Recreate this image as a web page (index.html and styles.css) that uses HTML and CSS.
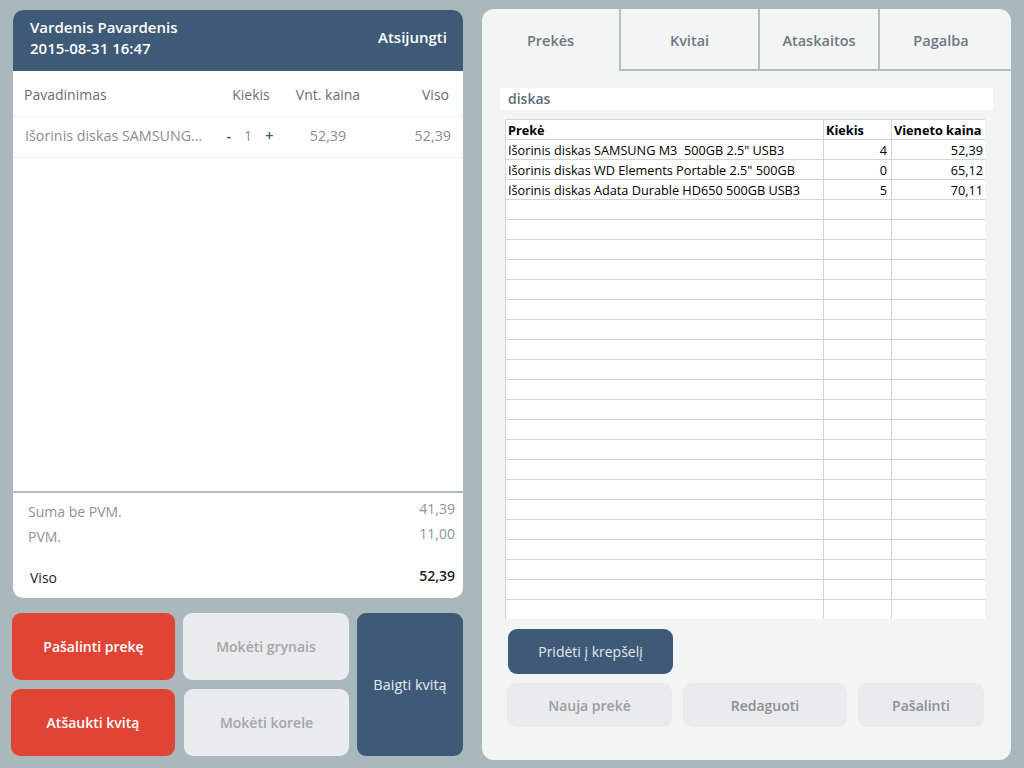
FILE: index.html
```html
<!DOCTYPE html>
<html lang="lt">
<head>
<meta charset="utf-8">
<title>Kasa</title>
<link rel="stylesheet" href="styles.css">
</head>
<body>
<div class="app">
  <div class="left">
    <section class="receipt">
      <header class="rc-head">
        <div class="user">
          <div>Vardenis Pavardenis</div>
          <div>2015-08-31 16:47</div>
        </div>
        <div class="logout">Atsijungti</div>
      </header>
      <div class="rc-cols">
        <span class="c-name">Pavadinimas</span>
        <span class="c-qty">Kiekis</span>
        <span class="c-price">Vnt. kaina</span>
        <span class="c-total">Viso</span>
      </div>
      <div class="rc-row">
        <span class="c-name">Išorinis diskas SAMSUNG...</span>
        <span class="c-qty"><b class="pm">-</b><span class="q">1</span><b class="pm">+</b></span>
        <span class="c-price">52,39</span>
        <span class="c-total">52,39</span>
      </div>
      <div class="rc-space"></div>
      <div class="rc-foot">
        <div class="sum-row muted"><span>Suma be PVM.</span><span class="v">41,39</span></div>
        <div class="sum-row muted"><span>PVM.</span><span class="v">11,00</span></div>
        <div class="sum-row total"><span>Viso</span><span class="v">52,39</span></div>
      </div>
    </section>
    <div class="actions">
      <button class="btn red a1">Pašalinti prekę</button>
      <button class="btn light a2">Mokėti grynais</button>
      <button class="btn blue a3">Baigti kvitą</button>
      <button class="btn red a4">Atšaukti kvitą</button>
      <button class="btn light a5">Mokėti korele</button>
    </div>
  </div>
  <section class="right">
    <nav class="tabs">
      <div class="tab active t1">Prekės</div>
      <div class="tab t2">Kvitai</div>
      <div class="tab t3">Ataskaitos</div>
      <div class="tab t4">Pagalba</div>
    </nav>
    <div class="search">diskas</div>
    <div class="grid-wrap">
      <table class="grid">
        <colgroup><col class="g1"><col class="g2"><col class="g3"></colgroup>
        <thead>
          <tr><th>Prekė</th><th>Kiekis</th><th>Vieneto kaina</th></tr>
        </thead>
        <tbody>
          <tr><td>Išorinis diskas SAMSUNG M3&nbsp; 500GB 2.5" USB3</td><td class="n">4</td><td class="n">52,39</td></tr>
          <tr><td>Išorinis diskas WD Elements Portable 2.5" 500GB</td><td class="n">0</td><td class="n">65,12</td></tr>
          <tr><td>Išorinis diskas Adata Durable HD650 500GB USB3</td><td class="n">5</td><td class="n">70,11</td></tr>
          <tr><td></td><td></td><td></td></tr>
          <tr><td></td><td></td><td></td></tr>
          <tr><td></td><td></td><td></td></tr>
          <tr><td></td><td></td><td></td></tr>
          <tr><td></td><td></td><td></td></tr>
          <tr><td></td><td></td><td></td></tr>
          <tr><td></td><td></td><td></td></tr>
          <tr><td></td><td></td><td></td></tr>
          <tr><td></td><td></td><td></td></tr>
          <tr><td></td><td></td><td></td></tr>
          <tr><td></td><td></td><td></td></tr>
          <tr><td></td><td></td><td></td></tr>
          <tr><td></td><td></td><td></td></tr>
          <tr><td></td><td></td><td></td></tr>
          <tr><td></td><td></td><td></td></tr>
          <tr><td></td><td></td><td></td></tr>
          <tr><td></td><td></td><td></td></tr>
          <tr><td></td><td></td><td></td></tr>
          <tr><td></td><td></td><td></td></tr>
          <tr><td></td><td></td><td></td></tr>
          <tr><td></td><td></td><td></td></tr>
          <tr><td></td><td></td><td></td></tr>
          <tr><td></td><td></td><td></td></tr>
        </tbody>
      </table>
    </div>
    <div class="r-actions">
      <button class="btn blue add">Pridėti į krepšelį</button>
      <div class="r-row">
        <button class="btn light r1">Nauja prekė</button>
        <button class="btn light r2">Redaguoti</button>
        <button class="btn light r3">Pašalinti</button>
      </div>
    </div>
  </section>
</div>
</body>
</html>
```
FILE: styles.css
```css
* { box-sizing: border-box; }
html, body { margin: 0; padding: 0; }
body {
  background: #a9b8bb;
  font-family: "Open Sans", "Noto Sans", sans-serif;
  width: 1024px;
  height: 768px;
  overflow: hidden;
}
.app {
  display: flex;
  align-items: flex-start;
  padding: 9px 0 0 11px;
}
.left {
  width: 452px;
  display: flex;
  flex-direction: column;
}
.receipt {
  margin: 1px 0 0 2px;
  width: 450px;
  height: 588px;
  background: #ffffff;
  border-radius: 10px;
  overflow: hidden;
  display: flex;
  flex-direction: column;
}
.rc-head {
  height: 61px;
  background: #3e5a77;
  color: #ffffff;
  display: flex;
  align-items: center;
  justify-content: space-between;
  padding: 0 16px 6px 17px;
  font-size: 15px;
  font-weight: 600;
  line-height: 21px;
}
.rc-cols, .rc-row {
  display: flex;
  align-items: center;
  font-size: 14px;
  border-bottom: 1px solid #eeeeee;
}
.rc-cols { height: 46px; color: #6a6f74; padding-top: 1px; }
.rc-row { height: 41px; color: #8a8e92; padding-bottom: 4px; font-size: 14.3px; }
.c-name { width: 200px; padding-left: 11px; white-space: nowrap; }
.rc-row .c-name { padding-left: 12px; }
.c-qty { width: 76px; text-align: center; }
.rc-row .c-qty { display: flex; justify-content: center; gap: 13px; padding-right: 2px; }
.pm { color: #3e5a77; font-weight: 600; }
.c-price { width: 78px; text-align: center; }
.c-total { flex: 1; text-align: right; padding-right: 14px; }
.rc-row .c-total { padding-right: 12px; }
.rc-space { flex: 1; }
.rc-foot {
  height: 107px;
  border-top: 2px solid #afbbbf;
  padding: 9px 8px 0 15px;
  font-size: 14px;
}
.sum-row {
  display: flex;
  justify-content: space-between;
}
.sum-row.muted { color: #8f9397; height: 25px; }
.sum-row.muted .v { margin-top: -3px; }
.sum-row.total { color: #1d1f21; margin-top: 16px; padding-left: 2px; }
.sum-row.total .v { margin-top: -2px; font-weight: 600; }
.actions {
  margin-top: 15px;
  display: grid;
  grid-template-columns: 164px 166px 106px;
  grid-template-rows: 67px 67px;
  column-gap: 8px;
  row-gap: 9px;
}
.btn {
  border: 0;
  border-radius: 9px;
  font-family: "Open Sans", "Noto Sans", sans-serif;
  font-size: 14px;
  font-weight: 600;
  display: flex;
  align-items: center;
  justify-content: center;
  padding: 0;
}
.btn.red { background: #e04434; color: #ffffff; }
.btn.light { background: #e9ebec; color: #a3a6a9; }
.btn.blue { background: #3e5a77; color: #e4e9ef; }
.a1 { margin-left: 1px; }
.a3 { grid-column: 3; grid-row: 1 / span 2; font-weight: 500; font-size: 14.5px; }
.a4 { grid-column: 1; grid-row: 2; }
.a5 { grid-column: 2; grid-row: 2; margin-left: 1px; }

.right {
  margin-left: 19px;
  width: 529px;
  height: 751px;
  background: #f3f5f4;
  border-radius: 12px;
  overflow: hidden;
  display: flex;
  flex-direction: column;
}
.tabs { display: flex; height: 62px; }
.tab {
  display: flex;
  align-items: center;
  justify-content: center;
  color: #6e7881;
  font-size: 14.5px;
  font-weight: 600;
  border-bottom: 2px solid #b3bec1;
  border-left: 2px solid #b3bec1;
  padding-top: 3px;
}
.tab.active { border-bottom: 0; border-left: 0; }
.t1 { width: 137px; padding-top: 1px; }
.t2 { width: 139px; }
.t3 { width: 120px; }
.t4 { flex: 1; padding-right: 9px; }
.search {
  margin: 17px 0 0 18px;
  width: 493px;
  height: 22px;
  background: #ffffff;
  color: #5f6b75;
  font-size: 14px;
  font-weight: 600;
  padding-left: 8px;
  line-height: 22px;
}
.grid-wrap {
  margin: 9px 0 0 23px;
  width: 480px;
  height: 500px;
  overflow: hidden;
  background: #ffffff;
}
.grid {
  width: 482px;
  border-collapse: collapse;
  table-layout: fixed;
  font-family: "Open Sans", "Noto Sans", sans-serif;
  font-size: 12.7px;
  color: #000000;
}
.g1 { width: 318px; }
.g2 { width: 68px; }
.g3 { width: 96px; }
.grid th, .grid td {
  height: 20px;
  padding: 0 2px;
  border: 1px solid #d5d5d5;
  white-space: nowrap;
  overflow: hidden;
  text-align: left;
  line-height: 18px;
}
.grid th { font-weight: 700; }
.grid td.n { text-align: right; padding-right: 4px; }
.r-actions {
  padding: 10px 0 0 26px;
  display: flex;
  flex-direction: column;
}
.add {
  width: 165px;
  height: 45px;
  font-weight: 500;
  font-size: 14px;
}
.r-row {
  display: flex;
  margin-top: 9px;
  margin-left: -1px;
  height: 44px;
}
.r-row .btn { font-weight: 600; color: #8b8f93; height: 44px; }
.r1 { width: 165px; color: #9a9ea2 !important; }
.r2 { width: 164px; margin-left: 11px; }
.r3 { width: 126px; margin-left: 11px; }
```
